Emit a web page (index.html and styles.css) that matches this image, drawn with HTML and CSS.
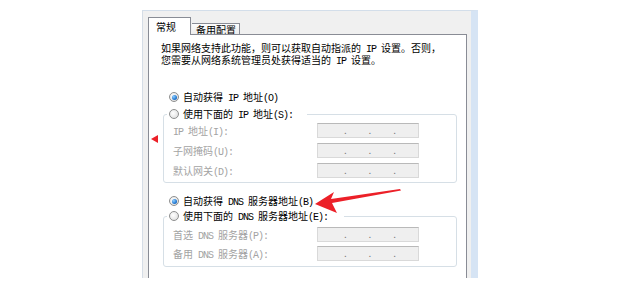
FILE: index.html
```html
<!DOCTYPE html>
<html lang="zh-CN">
<head>
<meta charset="utf-8">
<title>Internet 协议版本 4 (TCP/IPv4) 属性</title>
<link rel="stylesheet" href="styles.css">
</head>
<body>
<div class="dialog">
  <div class="tabs">
    <div class="tab tab-active">常规</div>
    <div class="tab tab-idle">备用配置</div>
  </div>
  <div class="panel">
    <p class="intro">如果网络支持此功能，则可以获取自动指派的<span class="en"> IP </span>设置。否则，<br>您需要从网络系统管理员处获得适当的<span class="en"> IP </span>设置。</p>

    <div class="radio-row auto-ip"><span class="radio radio-checked"></span><span>自动获得<span class="en"> IP </span>地址<span class="en">(O)</span></span></div>
    <fieldset class="group group-ip">
      <legend class="radio-row legend-ip"><span class="radio"></span><span>使用下面的<span class="en"> IP </span>地址<span class="en">(S):</span></span></legend>
      <div class="rows rows-ip">
        <div class="row"><span class="label"><span class="en">IP </span>地址<span class="en">(I):</span></span><div class="ipbox"><span>.</span><span>.</span><span>.</span></div></div>
        <div class="row"><span class="label">子网掩码<span class="en">(U):</span></span><div class="ipbox"><span>.</span><span>.</span><span>.</span></div></div>
        <div class="row"><span class="label">默认网关<span class="en">(D):</span></span><div class="ipbox"><span>.</span><span>.</span><span>.</span></div></div>
      </div>
    </fieldset>

    <div class="radio-row auto-dns"><span class="radio radio-checked"></span><span>自动获得<span class="en"> DNS </span>服务器地址<span class="en">(B)</span></span></div>
    <fieldset class="group group-dns">
      <legend class="radio-row legend-dns"><span class="radio"></span><span>使用下面的<span class="en"> DNS </span>服务器地址<span class="en">(E):</span></span></legend>
      <div class="rows rows-dns">
        <div class="row"><span class="label">首选<span class="en"> DNS </span>服务器<span class="en">(P):</span></span><div class="ipbox"><span>.</span><span>.</span><span>.</span></div></div>
        <div class="row"><span class="label">备用<span class="en"> DNS </span>服务器<span class="en">(A):</span></span><div class="ipbox"><span>.</span><span>.</span><span>.</span></div></div>
      </div>
    </fieldset>
  </div>
</div>

<svg class="marks" width="620" height="289" viewBox="0 0 620 289" aria-hidden="true">
  <polygon points="151,139 158,135 158,143" fill="#ec2028"/>
  <polygon points="315,204 334,192 331,199 400,189 401,190.5 332,203 337,213" fill="#ec2028"/>
</svg>
</body>
</html>
```

FILE: styles.css
```css
html, body {
  margin: 0;
  padding: 0;
  background: #ffffff;
}

body {
  position: relative;
  width: 620px;
  height: 289px;
  overflow: hidden;
  font-family: "Noto Sans CJK SC", "Noto Sans", sans-serif;
  font-size: 10px;
  color: #000000;
}

.en {
  font-family: "Liberation Mono", "DejaVu Sans Mono", monospace;
  font-size: 10px;
  line-height: 9px;
  letter-spacing: -1px;
  white-space: pre;
}

.dialog {
  box-sizing: border-box;
  margin: 10px 0 0 142px;
  width: 336px;
  height: 268px;
  display: flex;
  flex-direction: column;
  background: #f0f0f0;
  border-top: 1px solid #d3deea;
  border-left: 1px solid #d5dde6;
  border-right: 7px solid #d6e4f4;
  padding: 6px 4px 0 5px;
}

.tabs {
  display: flex;
  align-items: flex-end;
  height: 18px;
}

.tab {
  box-sizing: border-box;
  border: 1px solid #898c95;
  border-bottom: none;
  white-space: nowrap;
}

.tab-active {
  position: relative;
  z-index: 2;
  height: 18px;
  line-height: 17px;
  padding: 0 14px 0 7px;
  background: #ffffff;
}

.tab-idle {
  height: 12px;
  line-height: 12px;
  padding: 0 3px 0 4px;
  margin-left: 1px;
  border-left: none;
  background: linear-gradient(#fdfdfd, #ebebeb);
}

.panel {
  position: relative;
  z-index: 1;
  flex: 1;
  margin-top: -1px;
  background: #ffffff;
  border: 1px solid #898c95;
  border-bottom: none;
  padding: 7px 0 0 12px;
}

.intro {
  margin: 0;
  line-height: 12px;
  white-space: nowrap;
}

.radio-row {
  display: flex;
  align-items: center;
  height: 14px;
  line-height: 14px;
  white-space: nowrap;
}

.auto-ip {
  margin-top: 24px;
  padding-left: 8px;
}

.auto-dns {
  margin-top: 11px;
  padding-left: 8px;
}

.radio {
  box-sizing: border-box;
  flex: none;
  width: 10px;
  height: 10px;
  margin-right: 4px;
  border: 1px solid #8e8f8f;
  border-radius: 50%;
  background: radial-gradient(circle at 40% 40%, #ffffff 0%, #e8e8e8 60%, #d4d4d4 100%);
  display: flex;
  align-items: center;
  justify-content: center;
}

.radio-checked::after {
  content: "";
  width: 5px;
  height: 5px;
  border-radius: 50%;
  background: radial-gradient(circle at 35% 35%, #8fd0ff 0%, #2b7fd6 55%, #0f4f9c 100%);
}

.group {
  box-sizing: border-box;
  width: 294px;
  min-width: 0;
  margin: 0 0 0 2px;
  padding: 0 0 4px 3px;
  border: 1px solid #d6dfe6;
  border-radius: 3px;
}

.group-ip {
  margin-top: 3px;
}

.group-dns {
  margin-top: 1px;
  padding-bottom: 5px;
}

.legend-ip {
  padding: 0 14px 0 2px;
}

.legend-dns {
  padding: 0 16px 0 2px;
}

.rows {
  display: flex;
  flex-direction: column;
  padding-left: 6px;
}

.rows-ip {
  padding-top: 2px;
  gap: 5px;
}

.rows-dns {
  padding-top: 4px;
  gap: 4px;
}

.row {
  display: grid;
  grid-template-columns: 144px 102px;
  height: 15px;
}

.label {
  line-height: 15px;
  color: #a3a3a3;
  white-space: nowrap;
}

.ipbox {
  box-sizing: border-box;
  height: 15px;
  display: flex;
  justify-content: space-evenly;
  align-items: flex-end;
  padding: 0 0 2px 4px;
  background: #efefef;
  border: 1px solid #d9d9d9;
  border-top-color: #b9b9b9;
  color: #7a7a7a;
  font-size: 10px;
  line-height: 10px;
}

.marks {
  position: absolute;
  z-index: 5;
  left: 0;
  top: 0;
  pointer-events: none;
}
```
